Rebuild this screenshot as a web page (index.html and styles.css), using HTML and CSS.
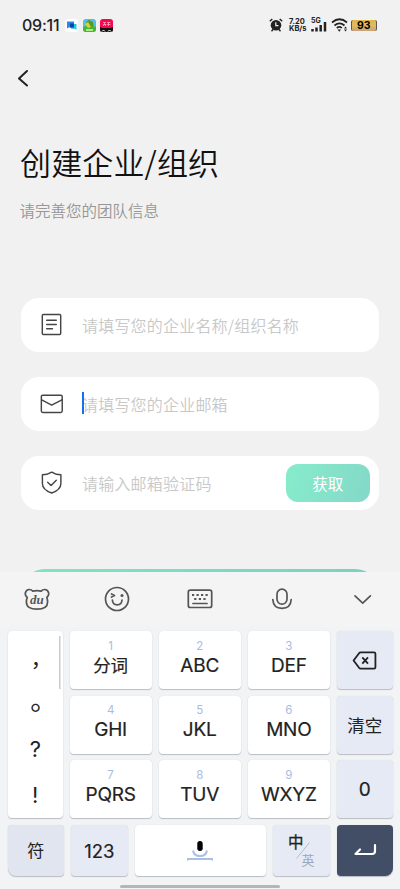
FILE: index.html
```html
<!DOCTYPE html>
<html lang="zh-CN">
<head>
<meta charset="utf-8">
<meta name="viewport" content="width=device-width, initial-scale=1">
<title>创建企业/组织</title>
<link rel="stylesheet" href="styles.css">
</head>
<body>
<div class="screen">
  <header class="status">
    <span class="clock">09:11</span>
    <svg class="app" viewBox="0 0 13 13"><rect width="13" height="13" rx="3" fill="#fff"/><path d="M2 2.500h7v6H3.500l-1.500 1z" fill="#2a86ee"/><path d="M6 5h5.500v6l-1.500-1.200H6z" fill="#23c5e8"/><path d="M5 4.500h4v4H5z" fill="#0b479f"/></svg>
    <svg class="app" viewBox="0 0 13 13"><rect width="13" height="13" rx="3" fill="#56bde9"/><path d="M0 8q6-3 13 0v2q0 3-3 3H3q-3 0-3-3z" fill="#42b834"/><path d="M3 3l3-2 4 2 .5 4L7 9 4 8z" fill="#549d24"/><path d="M2 5l3-2 3 5-3 1z" fill="#d9d23a"/><path d="M3 11h7" stroke="#d9f5a3" stroke-width="1.500"/></svg>
    <svg class="app" viewBox="0 0 13 13"><rect width="13" height="13" rx="3" fill="#f4084f"/><path d="M0 8l2 1h9l2-1v3q0 2-2 2H2q-2 0-2-2z" fill="#111"/><path d="M3 3.500h3M2.800 5.500h3.500M4.500 3.500v2L3 7m1.500-1.500L6 7M7 3.500h3.500M8.500 3v4M7 5.500h3.500" stroke="#ffb3cb" stroke-width=".7" fill="none"/><path d="M2 12.500q1.500-3 3 0M8 12.500q1.500-3 3 0" stroke="#fff" fill="none"/></svg>
    <span class="grow"></span>
    <svg class="alarm" viewBox="0 0 14 14"><circle cx="7" cy="7.200" r="5.300" fill="#222"/><path d="M.8 3.200L3.300.9M13.200 3.200L10.700.9M2.500 13.300l1.700-2M11.500 13.300l-1.700-2" stroke="#222" stroke-width="1.400"/><path d="M6.800 4.300v3.300h2.600" fill="none" stroke="#f1f1f1" stroke-width="1.200"/></svg>
    <span class="rate">7.20<br>KB/s</span>
    <span class="cell"><b>5G</b><svg viewBox="0 0 16 10"><path d="M1.500 9.500V7M5.500 9.500V5.500M9.700 9.500V3M14 9.500V0" stroke="#222" stroke-width="2.500"/></svg></span>
    <svg class="wifi" viewBox="0 0 17 14"><path d="M1 4.500q7.500-6.500 15 0M3.500 7.500q5-4.300 10 0M5.800 10q2.700-2.200 5 0" fill="none" stroke="#222" stroke-width="1.700"/><path d="M6.500 11.500h3.500L8.300 13.700z" fill="#222"/><path d="M14.500 8.500l1.500 2h-3zM14.500 13.500l1.500-2h-3z" fill="#222"/></svg>
    <span class="battery">93</span>
  </header>
  <main class="page">
    <svg class="back" viewBox="0 0 12 18"><path d="M10 2L2 9.500l8 7" fill="none" stroke="#222" stroke-width="2" stroke-linecap="round" stroke-linejoin="round"/></svg>
    <h1>创建企业/组织</h1>
    <p class="sub">请完善您的团队信息</p>
    <div class="form">
      <div class="field">
        <svg class="ficon" viewBox="0 0 24 24"><path d="M3.500 1.600h17q1.100 0 1.100 1.100v18.600q0 1.100-1.100 1.100h-17q-1.100 0-1.100-1.100V2.700q0-1.100 1.100-1.100zM7 7.500h10M7 12h10M7 16.500h6"/></svg>
        <span class="hint">请填写您的企业名称/组织名称</span>
      </div>
      <div class="field">
        <svg class="ficon" viewBox="0 0 24 24"><rect x="1.400" y="3.300" width="21.800" height="18" rx="1.500"/><path d="M1.800 8.200L12.200 13.600 22.800 8.200"/></svg>
        <span class="hint">请填写您的企业邮箱<i class="caret"></i></span>
      </div>
      <div class="field">
        <svg class="ficon" viewBox="0 0 24 24"><path d="M12.200 1.200Q16.500 4 21.800 4v9q0 6.500-9.600 10Q2.500 19.500 2.500 13V4q5.300 0 9.700-2.800zM8 11.800l3.500 3.300 5.500-5.400"/></svg>
        <span class="hint">请输入邮箱验证码</span>
        <button class="get">获取</button>
      </div>
      <div class="submit"></div>
    </div>
  </main>
  <section class="keyboard">
    <div class="tools">
      <svg viewBox="0 0 26 26"><path d="M3.200 11.500Q.8 9.500 1.400 6.800 2.200 3.500 5.300 3.500q2.300 0 3.500 1.700 4.200-1 8.400 0 1.200-1.700 3.500-1.700 3.100 0 3.900 3.300.6 2.700-1.800 4.700.8 2 .8 4.500 0 7.200-10.600 7.200T2.400 16q0-2.500.8-4.500z"/><text class="du" x="12.800" y="18" text-anchor="middle">du</text></svg>
      <svg class="smile" viewBox="0 0 26 26"><circle cx="13" cy="13" r="11.500"/><path d="M8.400 14q.2 4.800 4.800 4.800T18 14M7.500 8l3 1.500-3 1.500"/><circle cx="18" cy="9.500" r="1.500" fill="#555" stroke="none"/></svg>
      <svg class="board" viewBox="0 0 26 26"><rect x="1.300" y="4.200" width="23.400" height="17.300" rx="2"/><path class="dots" d="M5 9h2.200m2.300 0h2.200m2.300 0h2.200m2.300 0h2.200M7.200 13h2.200m2.400 0H14m2.400 0h2.200"/><path d="M6 17.500h14"/></svg>
      <svg class="mic" viewBox="0 0 26 26"><rect x="8" y="3.200" width="10" height="15" rx="5"/><path d="M3.800 13.500q.5 8.800 9.200 8.800t9.200-8.800"/></svg>
      <svg class="fold" viewBox="0 0 26 26"><path d="M5 9.800l7.700 7.300 7.700-7.300"/></svg>
    </div>
    <div class="keys">
      <div class="key punct"><span class="comma">，</span><span class="stop">。</span><span>?</span><span>!</span></div>
      <div class="key"><small>1</small><span class="cn">分词</span></div>
      <div class="key"><small>2</small><span>ABC</span></div>
      <div class="key"><small>3</small><span>DEF</span></div>
      <div class="key alt"><svg class="del" viewBox="0 0 26 20"><path d="M9 1.500h14q1.500 0 1.500 1.500v14q0 1.500-1.500 1.500H9q-1 0-1.700-.8L1.500 10l5.800-7.700q.7-.8 1.700-.8zM10.700 6.700l6 6.600M16.700 6.700l-6 6.600"/></svg></div>
      <div class="key"><small>4</small><span>GHI</span></div>
      <div class="key"><small>5</small><span>JKL</span></div>
      <div class="key"><small>6</small><span>MNO</span></div>
      <div class="key alt clear">清空</div>
      <div class="key"><small>7</small><span>PQRS</span></div>
      <div class="key"><small>8</small><span>TUV</span></div>
      <div class="key"><small>9</small><span>WXYZ</span></div>
      <div class="key alt zero">0</div>
    </div>
    <div class="bottom">
      <div class="key alt sym">符</div>
      <div class="key alt num">123</div>
      <div class="key space"><svg viewBox="0 0 26 24"><path d="M6 10.500q1 5.500 7 5.500t7-5.500M.5 20.500v-1.500h25v1.500" fill="none" stroke="#abbfe5" stroke-width="2"/><rect x="10.300" y="1" width="5.400" height="10" rx="2.700" fill="#000"/></svg></div>
      <div class="key alt lang"><span class="zh">中</span><svg viewBox="0 0 14 17"><path d="M.5 16.500l13-16" stroke="#b3bdce"/></svg><span class="en">英</span></div>
      <div class="key enter"><svg viewBox="0 0 24 14"><path d="M22 2v6q0 3-3 3H2.500L7 6.500" fill="none" stroke="#fff" stroke-width="2.200" stroke-linecap="round" stroke-linejoin="round"/></svg></div>
    </div>
    <div class="home"></div>
  </section>
</div>
</body>
</html>
```
FILE: styles.css
```css
* { box-sizing: border-box; }
body { margin: 0; background: #f1f1f1; font-family: "Noto Sans", "Noto Sans CJK SC", sans-serif; }
.screen { width: 400px; height: 889px; display: flex; flex-direction: column; overflow: hidden; background: #f1f1f1; }
.status { height: 50px; display: flex; align-items: center; padding: 0 23.500px 0 22px; color: #222; flex: none; }
.clock { font: 500 16px/20px Inter, sans-serif; width: 43px; letter-spacing: -.25px; white-space: nowrap; }
.app { width: 13px; height: 13px; margin-right: 4.500px; flex: none; }
.grow { flex: 1; }
.alarm { width: 14px; height: 14px; margin-right: 6px; }
.rate { font: 700 7.500px/7.500px Inter, sans-serif; width: 22px; white-space: nowrap; }
.cell { display: flex; flex-direction: column; width: 16px; height: 14px; margin-right: 4px; }
.cell b { font: 700 7px/5px Inter, sans-serif; }
.cell svg { width: 16px; height: 10px; margin-top: -1px; }
.wifi { width: 17px; height: 14px; margin-right: 3px; }
.battery { width: 25.500px; height: 11px; border-radius: 2px; background: linear-gradient(#e0b544, #e1bb62 50%, #c7a27a); border: solid #5d584e; border-width: 0 1.500px; font: 700 10.500px/11px Inter, sans-serif; text-align: center; color: #000; }
.page { height: 522px; flex: none; padding: 0 21px; overflow: hidden; display: flex; flex-direction: column; }
.back { width: 12px; height: 18px; margin: 19px 0 0 -4px; flex: none; }
h1 { margin: 52px 0 0 -1px; font: 350 31px/46px "Noto Sans CJK SC", sans-serif; letter-spacing: .15px; color: #111; white-space: nowrap; }
.sub { margin: 12.500px 0 0 -1.500px; font: 350 15.500px/24px "Noto Sans CJK SC", sans-serif; color: #969696; white-space: nowrap; }
.form { margin-top: 76.500px; display: flex; flex-direction: column; gap: 25.500px; }
.field { height: 53.500px; flex: none; border-radius: 18px; background: #fff; display: flex; align-items: center; padding: 0 9px 0 19px; }
.ficon { width: 23px; height: 23px; fill: none; stroke: #454545; stroke-width: 1.500; stroke-linecap: round; stroke-linejoin: round; }
.hint { position: relative; margin-left: 19px; flex: 1; font: 350 16px/24px "Noto Sans CJK SC", sans-serif; letter-spacing: .2px; color: #c8c8c8; white-space: nowrap; }
.caret { position: absolute; left: 0; top: 0; width: 2px; height: 22px; background: #146ff5; }
.get { width: 84.500px; height: 38.500px; border: 0; border-radius: 12px; background: linear-gradient(105deg, #86eccb, #84d8c8); color: #fff; font: 400 15.500px/24px "Noto Sans CJK SC", sans-serif; padding: 0; }
.submit { height: 53px; flex: none; margin-top: 33.500px; border-radius: 24px; background: linear-gradient(90deg, #7ee5c5, #7bd0bf); }
.keyboard { flex: 1; background: #f2f3f5; display: flex; flex-direction: column; }
.tools { height: 54px; background: #f4f4f4; display: flex; padding: 14px 0 0 24px; }
.tools svg { width: 26px; height: 26px; fill: none; stroke: #555; stroke-width: 1.700; stroke-linecap: round; stroke-linejoin: round; }
.tools .smile { margin-left: 54px; }
.tools .board, .tools .mic { margin-left: 56.500px; }
.tools .fold { margin-left: 54.500px; }
.tools .dots { stroke-linecap: butt; stroke-width: 2; }
.tools .du { font: italic 700 13px "Liberation Serif", serif; fill: #555; stroke: none; }
.keys { margin: 5px 7.500px 0 8px; display: grid; grid-template-columns: 54.500px 82px 82px 82px 55.500px; grid-template-rows: repeat(3, 58px); column-gap: 7.125px; row-gap: 6.500px; }
.key { background: #fff; border-radius: 4px; box-shadow: 0 1px 1px #b9bcc4, 0 0 1px #d3d6dc; color: #222; display: flex; flex-direction: column; align-items: center; font: 400 19px/24px Inter, "Noto Sans CJK SC", sans-serif; }
.key small { font-size: 11.500px; line-height: 14px; margin-top: 7.500px; color: #a9bce2; }
.key small + span { line-height: 24px; margin-top: 1px; font-weight: 400; font-size: 19px; letter-spacing: -.2px; -webkit-text-stroke: .2px #222; }
.key small + .cn { font-size: 17.500px; }
.alt { background: #e6eaf5; justify-content: center; }
.punct { grid-row: span 3; justify-content: space-between; padding: 14px 0 11px; background: linear-gradient(#ccc, #ccc) 50.500px 5px / 1.500px 53px no-repeat #fff; }
.punct span { height: 24px; font: 400 22px/24px Inter, sans-serif; }
.punct .comma { font: 400 21px/24px "Noto Sans CJK SC", sans-serif; padding-left: 12px; }
.punct .stop { font: 400 27px/16px "Noto Sans CJK SC", sans-serif; padding-left: 17px; }
.del { width: 25px; height: 19px; fill: none; stroke: #222; stroke-width: 1.900; stroke-linejoin: round; }
.clear { font-size: 17.500px; padding-top: 2px; }
.zero { padding-top: 2px; -webkit-text-stroke: .2px #222; }
.bottom { display: flex; margin: 6.500px 7.500px 0 8px; height: 51.500px; }
.bottom .key { justify-content: center; }
.sym { width: 55.500px; margin-right: 7px; font-size: 17px; background: #e0e5ef; border-bottom-left-radius: 8px; }
.bottom .sym, .bottom .num { padding-top: 2px; }
.num { width: 57.500px; margin-right: 7px; font-size: 18.500px; -webkit-text-stroke: .2px #222; }
.space { flex: 1; margin-right: 7px; }
.space svg { width: 26px; height: 24px; margin-top: 4px; }
.key.lang { width: 57.500px; margin-right: 7px; flex-direction: row; align-items: center; }
.lang .zh { font-size: 15.500px; margin: -14px -8px 0 0; -webkit-text-stroke: .3px #222; }
.lang svg { width: 14px; height: 17px; }
.lang .en { font-size: 13px; margin: 20px 0 0 -8px; color: #9aa7bd; }
.enter { width: 55.500px; background: #424e66; border-bottom-right-radius: 8px; }
.enter svg { width: 24px; height: 14px; }
.home { width: 160px; height: 3px; border-radius: 2px; background: #b5b6b8; margin: 8.500px auto 0; }
```
